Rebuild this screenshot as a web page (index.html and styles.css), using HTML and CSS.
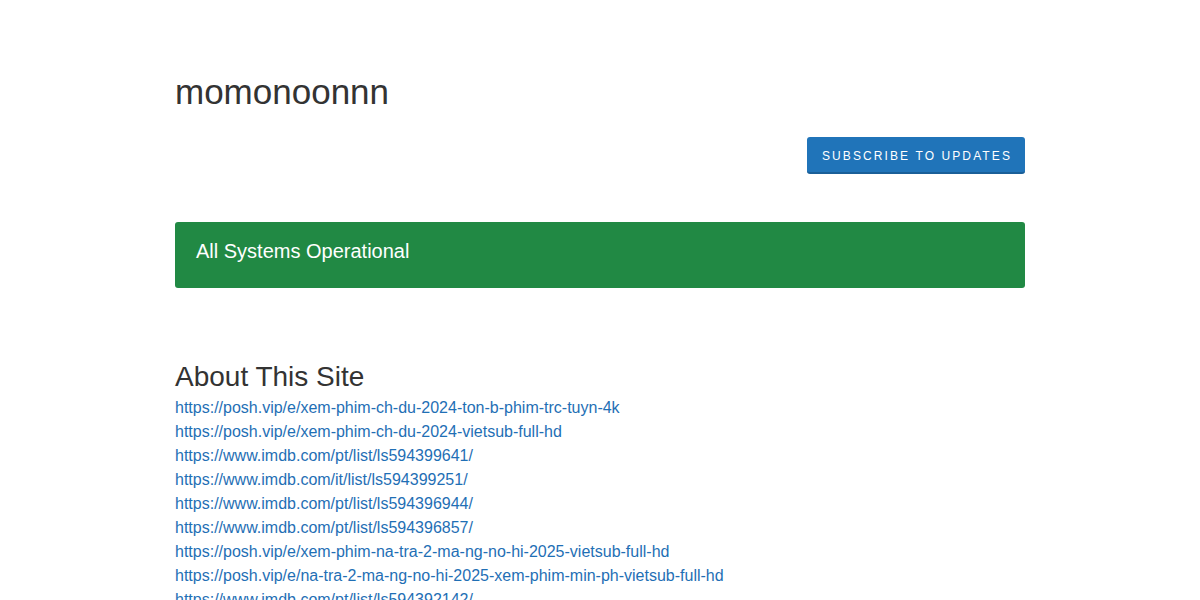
FILE: index.html
```html
<!DOCTYPE html>
<html lang="en">
<head>
    <meta charset="UTF-8">
    <meta name="viewport" content="width=device-width, initial-scale=1.0">
    <title>momonoonnn Status</title>
    <link rel="stylesheet" href="styles.css">
</head>
<body>
    <div class="container">
        <div class="page-header">
            <h1 class="page-name">momonoonnn</h1>
            <div class="header-actions">
                <button class="subscribe-btn" type="button">Subscribe to Updates</button>
            </div>
        </div>

        <div class="status-banner">
            <span class="status-text">All Systems Operational</span>
        </div>

        <div class="about">
            <h2>About This Site</h2>
            <div class="about-links">
                <a href="#">https://posh.vip/e/xem-phim-ch-du-2024-ton-b-phim-trc-tuyn-4k</a>
                <a href="#">https://posh.vip/e/xem-phim-ch-du-2024-vietsub-full-hd</a>
                <a href="#">https://www.imdb.com/pt/list/ls594399641/</a>
                <a href="#">https://www.imdb.com/it/list/ls594399251/</a>
                <a href="#">https://www.imdb.com/pt/list/ls594396944/</a>
                <a href="#">https://www.imdb.com/pt/list/ls594396857/</a>
                <a href="#">https://posh.vip/e/xem-phim-na-tra-2-ma-ng-no-hi-2025-vietsub-full-hd</a>
                <a href="#">https://posh.vip/e/na-tra-2-ma-ng-no-hi-2025-xem-phim-min-ph-vietsub-full-hd</a>
                <a href="#">https://www.imdb.com/pt/list/ls594392142/</a>
            </div>
        </div>
    </div>
</body>
</html>
```

FILE: styles.css
```css
body {
    margin: 0;
    font-family: "Liberation Sans", Arial, sans-serif;
    color: #333;
    background: #fff;
}
.container {
    width: 850px;
    margin: 0 auto;
    padding-top: 72px;
}
.page-name {
    margin: 0;
    font-size: 35px;
    line-height: 40px;
    font-weight: normal;
    color: #333;
}
.header-actions {
    display: flex;
    justify-content: flex-end;
    margin-top: 25px;
}
.subscribe-btn {
    height: 37px;
    padding: 2px 13px 0 15px;
    background-color: #2074b9;
    color: #fff;
    border: none;
    border-bottom: 2px solid #1a5f98;
    border-radius: 3px;
    font-family: "Liberation Sans", Arial, sans-serif;
    font-size: 12px;
    letter-spacing: 2.1px;
    text-transform: uppercase;
    cursor: pointer;
}
.status-banner {
    margin-top: 48px;
    height: 66px;
    padding: 0 21px;
    background-color: #218944;
    border-radius: 3px;
    display: flex;
    align-items: center;
}
.status-text {
    color: #fff;
    font-size: 20px;
    margin-top: -8px;
}
.about {
    margin-top: 71px;
}
.about h2 {
    margin: 0;
    font-size: 28px;
    line-height: 35px;
    font-weight: normal;
    color: #333;
}
.about-links {
    display: flex;
    flex-direction: column;
    align-items: flex-start;
    padding-top: 2px;
}
.about-links a {
    font-size: 16px;
    line-height: 24px;
    color: #1f6fb5;
    text-decoration: none;
}
```
